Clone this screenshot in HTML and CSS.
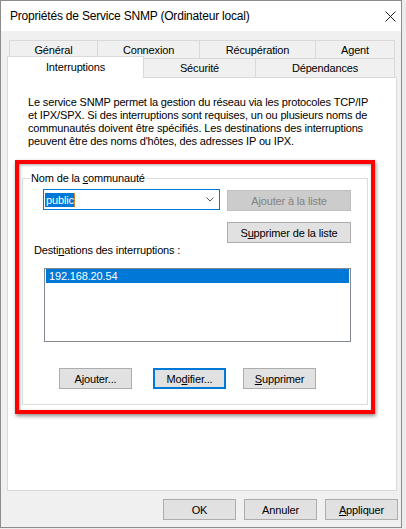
FILE: index.html
```html
<!DOCTYPE html>
<html lang="fr">
<head>
<meta charset="utf-8">
<title>Propriétés de Service SNMP (Ordinateur local)</title>
<link rel="stylesheet" href="styles.css">
</head>
<body>
<div class="window">
  <div class="titlebar">
    <span class="title">Propriétés de Service SNMP (Ordinateur local)</span>
    <svg class="close" width="11" height="11" viewBox="0 0 11 11" aria-label="Fermer"><path d="M0.5 0.5L10.5 10.5M10.5 0.5L0.5 10.5" stroke="#1a1a1a" stroke-width="1" fill="none"/></svg>
  </div>
  <div class="tabs">
    <div class="tabrow back">
      <div class="tab w-gen">Général</div>
      <div class="tab w-con">Connexion</div>
      <div class="tab w-rec">Récupération</div>
      <div class="tab w-age">Agent</div>
    </div>
    <div class="tabrow front">
      <div class="tab selected w-int">Interruptions</div>
      <div class="tab w-sec">Sécurité</div>
      <div class="tab w-dep">Dépendances</div>
    </div>
  </div>
  <div class="panel">
    <p class="desc">Le service SNMP permet la gestion du réseau via les protocoles TCP/IP<br>et IPX/SPX. Si des interruptions sont requises, un ou plusieurs noms de<br>communautés doivent être spécifiés. Les destinations des interruptions<br>peuvent être des noms d'hôtes, des adresses IP ou IPX.</p>
    <div class="highlight">
      <fieldset class="group">
        <legend>Nom de la <u>c</u>ommunauté</legend>
        <div class="row1">
          <div class="combo">
            <span class="sel">public</span>
            <svg class="chev" width="8" height="5" viewBox="0 0 8 5"><path d="M0.5 0.5L4 4L7.5 0.5" stroke="#555" stroke-width="1" fill="none"/></svg>
          </div>
          <button class="btn wide disabled add">Ajouter à la liste</button>
        </div>
        <button class="btn wide remove">S<u>u</u>pprimer de la liste</button>
        <div class="label">Desti<u>n</u>ations des interruptions :</div>
        <div class="list"><div class="item">192.168.20.54</div></div>
        <div class="actions">
          <button class="btn a1">A<u>j</u>outer...</button>
          <button class="btn focus a2">Mo<u>d</u>ifier...</button>
          <button class="btn a3"><u>S</u>upprimer</button>
        </div>
      </fieldset>
    </div>
  </div>
  <div class="footer">
    <button class="btn">OK</button>
    <button class="btn">Annuler</button>
    <button class="btn"><u>A</u>ppliquer</button>
  </div>
</div>
</body>
</html>
```
FILE: styles.css
```css
* { box-sizing: border-box; }
html, body { margin: 0; padding: 0; }
body {
  background: #ececec;
  font-family: "Liberation Sans", Arial, sans-serif;
  font-size: 11px;
  letter-spacing: -0.15px;
  color: #000;
}
u { text-decoration: underline; text-underline-offset: 1px; }

.window {
  width: 402px;
  height: 528px;
  border: 1px solid #8c8c8c;
  background: #f0f0f0;
  display: flex;
  flex-direction: column;
}
.titlebar {
  height: 30px;
  flex: none;
  background: #fff;
  display: flex;
  align-items: center;
  justify-content: space-between;
  padding: 0 5px 0 9px;
}
.title { font-size: 12px; letter-spacing: -0.2px; color: #000; }
.close { display: block; }

.tabs { margin-top: 9px; }
.tabrow { display: flex; }
.back { margin-left: 8px; }
.front { margin-left: 6px; align-items: flex-end; }
.tab {
  border: 1px solid #d9d9d9;
  border-bottom: none;
  background: #f0f0f0;
  display: flex;
  align-items: center;
  justify-content: center;
  white-space: nowrap;
}
.tab + .tab { margin-left: -1px; }
.back .tab { height: 18px; }
.front .tab { height: 19px; }
.front .tab.selected {
  height: 22px;
  margin-top: -2px;
  margin-bottom: -1px;
  background: #fff;
  padding-bottom: 2px;
  position: relative;
  z-index: 1;
}
.w-gen { width: 89px; }
.w-con { width: 103px; }
.w-rec { width: 117px; }
.w-age { width: 80px; }
.w-int { width: 137px; }
.w-sec { width: 113px; }
.w-dep { width: 140px; }

.panel {
  margin-left: 6px;
  width: 390px;
  height: 414px;
  flex: none;
  background: #fff;
  border: 1px solid #d9d9d9;
  padding-top: 18px;
}
.desc {
  margin: 0 0 0 20px;
  line-height: 13px;
  white-space: nowrap;
}
.highlight {
  margin: 12px 0 0 7px;
  width: 360px;
  border: 4px solid #ff0000;
  padding: 8px 3px 5px 3px;
  box-shadow: 1px 2px 4px rgba(0,0,0,0.45), inset 1px 1px 3px rgba(0,0,0,0.35);
}
.group {
  margin: 0;
  padding: 0 0 15px 0;
  border: 1px solid #dcdcdc;
  min-width: 0;
}
.group legend {
  margin-left: 7px;
  padding: 0 1px;
  line-height: 13px;
}
.row1 {
  display: flex;
  align-items: flex-start;
  margin-top: 4px;
}
.combo {
  margin-left: 20px;
  width: 177px;
  height: 21px;
  border: 1px solid #0078d7;
  background: #fff;
  display: flex;
  align-items: center;
  justify-content: space-between;
  padding: 0 5px 0 1px;
}
.sel {
  background: #0078d7;
  color: #fff;
  line-height: 14px;
  padding: 0 0 0 1px;
  border-right: 1px solid #d9822b;
}
.chev { display: block; }

.btn {
  width: 73px;
  height: 21px;
  padding: 0;
  margin: 0;
  border: 1px solid #adadad;
  background: #e1e1e1;
  color: #000;
  font: inherit;
  letter-spacing: inherit;
  display: flex;
  align-items: center;
  justify-content: center;
  white-space: nowrap;
}
.btn.wide { width: 124px; }
.btn.disabled { background: #cccccc; border-color: #bfbfbf; color: #838383; }
.btn.focus { border: 2px solid #0078d7; }
.add { margin-left: 7px; margin-top: 1px; }
.remove { margin: 11px 0 0 204px; }

.label {
  margin: 1px 0 0 11px;
  line-height: 13px;
}
.list {
  margin: 11px 0 0 21px;
  width: 307px;
  height: 74px;
  border: 1px solid #828790;
  background: #fff;
  padding: 0 1px;
}
.item {
  height: 14px;
  line-height: 14px;
  background: #0078d7;
  color: #fff;
  padding-left: 3px;
}
.actions {
  display: flex;
  margin-top: 26px;
}
.a1 { margin-left: 36px; }
.a2 { margin-left: 21px; }
.a3 { margin-left: 17px; }

.footer {
  display: flex;
  justify-content: flex-end;
  gap: 8px;
  margin: 8px 3px 0 0;
}
```
